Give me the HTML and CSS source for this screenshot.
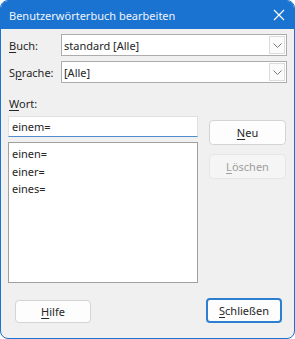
FILE: index.html
```html
<!DOCTYPE html>
<html lang="de">
<head>
    <meta charset="UTF-8">
    <title>Benutzerwörterbuch bearbeiten</title>
    <link rel="stylesheet" href="styles.css">
</head>
<body>
    <div class="dialog">
        <div class="titlebar">
            <span class="title">Benutzerwörterbuch bearbeiten</span>
            <svg class="close" width="12" height="12" viewBox="0 0 12 12"><path d="M1 1L11 11M11 1L1 11" stroke="#fff" stroke-width="1.2" fill="none"/></svg>
        </div>
        <div class="content">
            <div class="row">
                <label class="lbl"><u>B</u>uch:</label>
                <div class="combo">
                    <span class="combo-text">standard [Alle]</span>
                    <span class="drop"><svg width="9" height="5" viewBox="0 0 9 5"><path d="M0.5 0.5L4.5 4.5L8.5 0.5" stroke="#7a7a7a" fill="none"/></svg></span>
                </div>
            </div>
            <div class="row">
                <label class="lbl">S<u>p</u>rache:</label>
                <div class="combo">
                    <span class="combo-text">[Alle]</span>
                    <span class="drop"><svg width="9" height="5" viewBox="0 0 9 5"><path d="M0.5 0.5L4.5 4.5L8.5 0.5" stroke="#7a7a7a" fill="none"/></svg></span>
                </div>
            </div>
            <div class="wort-lbl"><u>W</u>ort:</div>
            <div class="main">
                <div class="left">
                    <div class="input">einem=</div>
                    <ul class="list">
                        <li>einen=</li>
                        <li>einer=</li>
                        <li>eines=</li>
                    </ul>
                </div>
                <div class="side">
                    <div class="btn"><u>N</u>eu</div>
                    <div class="btn disabled"><u>L</u>öschen</div>
                </div>
            </div>
            <div class="footer">
                <div class="btn help"><u>H</u>ilfe</div>
                <div class="btn default"><u>S</u>chließen</div>
            </div>
        </div>
    </div>
</body>
</html>
```

FILE: styles.css
```css
*{margin: 0;padding: 0;box-sizing: border-box;}
body{font-family: "Noto Sans", "Open Sans", sans-serif;font-size: 11px;color: #262626;background: #fff;}
u{text-decoration-thickness: 1px;text-underline-offset: 2px;}
.dialog{width: 295px;height: 339px;border: 1px solid #1a73d0;border-radius: 8px;overflow: hidden;background: #f0f0f0;display: flex;flex-direction: column;}
.titlebar{height: 28px;background: #1a73d0;display: flex;align-items: center;justify-content: space-between;padding: 0 9px 0 8px;color: #eef4fc;}
.title{font-size: 11px;}
.content{flex: 1;padding: 5px 7px 0 7px;display: flex;flex-direction: column;}
.row{display: flex;align-items: center;height: 22px;margin-bottom: 5px;}
.lbl{width: 53px;padding-left: 1px;}
.combo{flex: 1;height: 22px;background: #fff;border: 1px solid #acacac;display: flex;align-items: center;justify-content: space-between;padding: 0 1px 0 2px;}
.drop{width: 16px;height: 18px;border: 1px solid #dcdcdc;background: #fbfbfb;display: flex;align-items: center;justify-content: center;}
.wort-lbl{margin-top: 8px;height: 16px;padding-left: 1px;}
.main{display: flex;margin-top: 4px;}
.left{width: 190px;display: flex;flex-direction: column;}
.input{height: 21px;background: #fff;border: 1px solid #e0e0e0;border-bottom: 1px solid #4f8fd0;padding: 1px 0 0 3px;line-height: 18px;}
.list{list-style: none;margin-top: 5px;height: 141px;background: #fff;border: 1px solid #a0a0a0;padding: 2px 3px;}
.list li{height: 17.5px;line-height: 17.5px;}
.side{margin-left: 11px;margin-top: 4px;display: flex;flex-direction: column;gap: 9px;}
.btn{width: 77px;height: 25px;background: #fdfdfd;border: 1px solid #d4d4d4;border-radius: 4px;display: flex;align-items: center;justify-content: center;}
.btn.disabled{background: #f5f5f5;border-color: #e6e6e6;color: #9d9d9d;}
.footer{display: flex;justify-content: space-between;margin-top: 15px;padding: 0 5px 0 7px;align-items: flex-end;}
.btn.help{width: 76px;height: 23px;}
.btn.default{width: 76px;border: 2px solid #2f7fd0;}
```
